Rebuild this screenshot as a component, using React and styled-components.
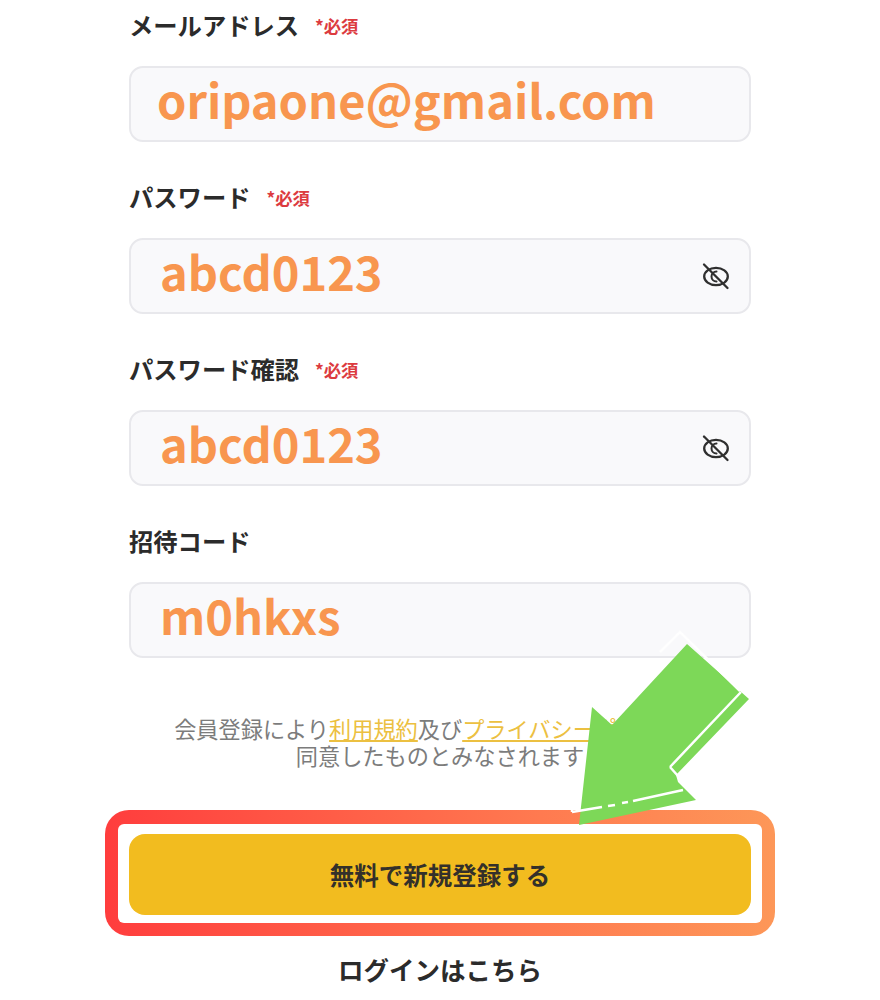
import styled, { createGlobalStyle } from 'styled-components'

const GlobalStyle = createGlobalStyle`
  html, body {
    margin: 0;
    padding: 0;
    background: #fff;
    font-family: "Noto Sans CJK JP", "Noto Sans", sans-serif;
  }
`

const Page = styled.main`
  position: relative;
  width: 880px;
  height: 1000px;
  overflow: hidden;
  box-sizing: border-box;
  padding: 8px 129px 0;
  background: #fff;
`

const Field = styled.section`
  display: flex;
  flex-direction: column;
  margin-bottom: 38px;
`

const LabelRow = styled.div`
  display: flex;
  align-items: center;
  gap: 16px;
  height: 34px;
  margin-bottom: 24px;
`

const Label = styled.label`
  font-size: 24.3px;
  font-weight: 700;
  color: #2b2b2b;
  line-height: 34px;
`

const Required = styled.span`
  font-size: 17.3px;
  font-weight: 700;
  color: #dc3b3f;
  line-height: 34px;
  padding-top: 2px;
`

const InputBox = styled.div`
  display: flex;
  align-items: center;
  justify-content: space-between;
  box-sizing: border-box;
  height: 76px;
  padding: 0 18px 0 ${(p) => p.$inset}px;
  background: #f9f9fb;
  border: 2px solid #e8e8ec;
  border-radius: 14px;
`

const Value = styled.span`
  margin-bottom: 10px;
  font-size: 47px;
  font-weight: 700;
  color: #f8964f;
  line-height: 62px;
`

const Notice = styled.p`
  margin: 57px 0 0;
  font-size: 22.2px;
  line-height: 27px;
  color: #7c7c7c;
  white-space: nowrap;
  text-align: center;
`

const TermsLink = styled.a`
  color: #ecc041;
  text-decoration: underline;
`

const ButtonFrame = styled.div`
  margin: 41px -24px 0;
  padding: 14px 13px 13px;
  border-radius: 24px;
  background: linear-gradient(90deg, #ff3d3d 0%, #ff7a50 65%, #fd9758 100%);
`

const FrameInner = styled.div`
  padding: 10px 11px 8px;
  background: #fff;
  border-radius: 6px;
`

const SubmitButton = styled.button`
  display: block;
  width: 100%;
  height: 81px;
  border: 0;
  border-radius: 16px;
  background: #f2bc1f;
  color: #33302a;
  font-family: inherit;
  font-size: 24.5px;
  font-weight: 700;
`

const LoginLink = styled.a`
  display: block;
  margin-top: 14px;
  font-size: 25.5px;
  font-weight: 700;
  line-height: 38px;
  color: #2b2b2b;
  text-align: center;
`

const ArrowOverlay = styled.svg`
  position: absolute;
  left: 0;
  top: 0;
  pointer-events: none;
`

function EyeOff() {
  return (
    <svg width="30" height="30" viewBox="0 0 30 30" fill="none" stroke="#2f2f2f" strokeWidth="2.3" strokeLinecap="round">
      <ellipse cx="15" cy="15.5" rx="11.8" ry="8.6" />
      <path d="M15.5 10.5a5 5 0 0 0-5 5 5 5 0 0 0 5 5" strokeWidth="2" />
      <path d="M3 3.5 26.5 27" />
    </svg>
  )
}

const fields = [
  { label: 'メールアドレス', required: true, value: 'oripaone@gmail.com', inset: 26 },
  { label: 'パスワード', required: true, value: 'abcd0123', inset: 29, secret: true },
  { label: 'パスワード確認', required: true, value: 'abcd0123', inset: 29, secret: true },
  { label: '招待コード', value: 'm0hkxs', inset: 29 },
]

export default function App() {
  return (
    <>
      <GlobalStyle />
      <Page>
        {fields.map((f) => (
          <Field key={f.label}>
            <LabelRow>
              <Label>{f.label}</Label>
              {f.required ? <Required>*必須</Required> : null}
            </LabelRow>
            <InputBox $inset={f.inset}>
              <Value>{f.value}</Value>
              {f.secret ? <EyeOff /> : null}
            </InputBox>
          </Field>
        ))}

        <Notice>
          会員登録により<TermsLink>利用規約</TermsLink>及び<TermsLink>プライバシーポリシー</TermsLink>に
          <br />
          同意したものとみなされます
        </Notice>

        <ButtonFrame>
          <FrameInner>
            <SubmitButton>無料で新規登録する</SubmitButton>
          </FrameInner>
        </ButtonFrame>

        <LoginLink>ログインはこちら</LoginLink>

        <ArrowOverlay width="880" height="1000" viewBox="0 0 880 1000">
          <path d="M592 707 612 725 687 644 749 699 676 775 678 782 696 800 579 825Z" fill="#7dd858" />
          <path d="M660 652 680 632 740 691M670 767 741 692M670 767 678 776" fill="none" stroke="#fff" strokeWidth="2.5" />
          <path d="M572 812 602 807M608 806 615 805M622 803 628 802M633 801 683 790M572 808 572 812" fill="none" stroke="#fff" strokeWidth="2.5" />
        </ArrowOverlay>
      </Page>
    </>
  )
}
